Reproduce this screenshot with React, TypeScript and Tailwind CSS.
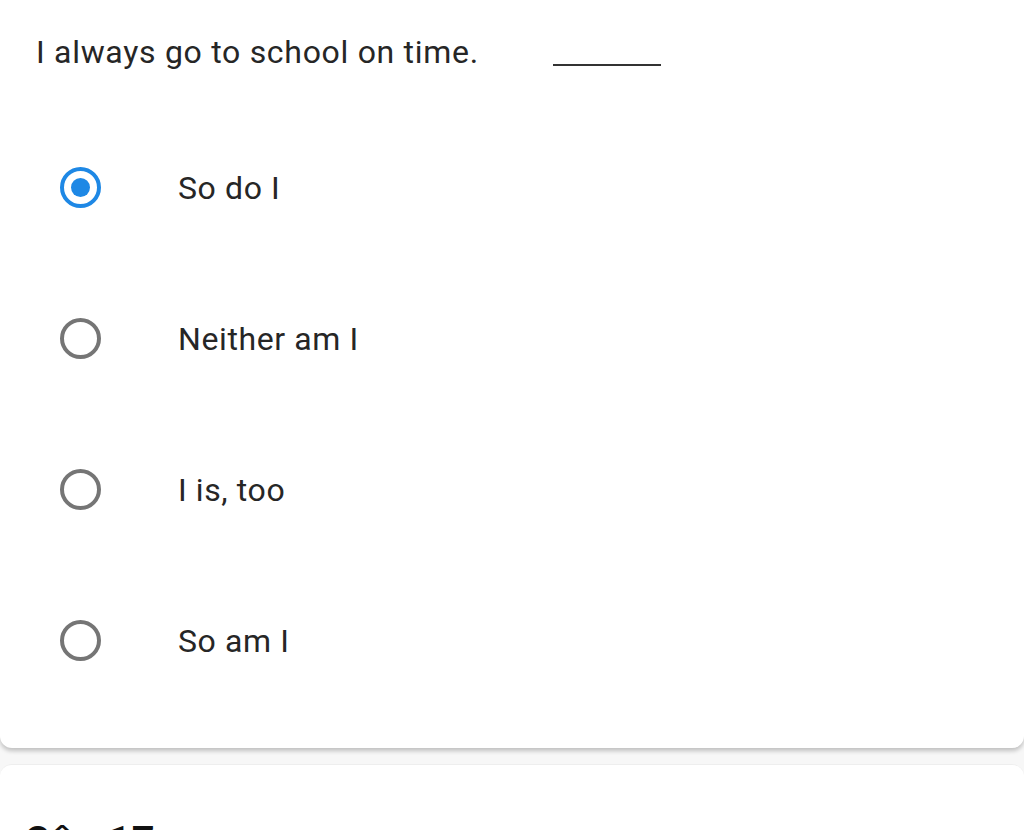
import React from "react";

const options = ["So do I", "Neither am I", "I is, too", "So am I"];

function Radio({ checked }: { checked: boolean }) {
  return checked ? (
    <div className="w-[41px] h-[41px] rounded-full border-[4px] border-[#1e88e5] flex items-center justify-center">
      <div className="w-[19px] h-[19px] rounded-full bg-[#1e88e5]" />
    </div>
  ) : (
    <div className="w-[41px] h-[41px] rounded-full border-[4px] border-[#757575]" />
  );
}

export default function App() {
  return (
    <div
      className="w-[1024px] h-[830px] overflow-hidden bg-[#f7f7f7] text-[#262626]"
      style={{ fontFamily: "Roboto, 'Liberation Sans', sans-serif" }}
    >
      <div className="bg-white rounded-b-[12px] shadow-[0_3px_4px_rgba(0,0,0,0.22)] pb-[32px]">
        <div className="flex items-end pl-[36px] pt-[30px] h-[72px]">
          <span className="text-[32px] leading-[40px] tracking-[0.7px]">I always go to school on time.</span>
          <span className="ml-[74px] mb-[6px] w-[108px] h-[2px] bg-[#333]" />
        </div>
        <div className="flex flex-col pt-[40px]">
          {options.map((o, i) => (
            <div key={o} className="flex items-center h-[151px] pl-[60px]">
              <Radio checked={i === 0} />
              <span className="ml-[77px] text-[32px] leading-[40px] tracking-[0.6px]">{o}</span>
            </div>
          ))}
        </div>
      </div>
      <div className="mt-[16px] bg-white rounded-t-[12px] border-t border-[#eeeeee] h-[80px] pt-[57px] pl-[24px]">
        <span className="text-[40px] font-semibold leading-[40px] tracking-[1px] text-[#111]">Câu 17</span>
      </div>
    </div>
  );
}
